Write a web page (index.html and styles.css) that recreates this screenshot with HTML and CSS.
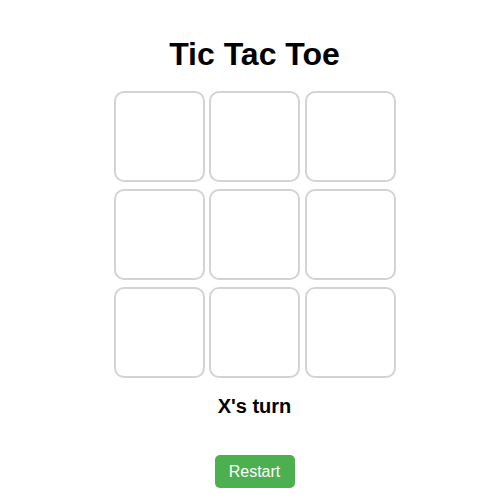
FILE: index.html
```html
<!DOCTYPE html>
<html>
<head>
<meta charset="utf-8">
<link rel="stylesheet" href="styles.css">
</head>
<body>
<div class="app">
  <h1 class="title">Tic Tac Toe</h1>
  <div class="board">
    <div class="cell"></div><div class="cell"></div><div class="cell"></div>
    <div class="cell"></div><div class="cell"></div><div class="cell"></div>
    <div class="cell"></div><div class="cell"></div><div class="cell"></div>
  </div>
  <div class="status">X's turn</div>
  <button class="restart">Restart</button>
</div>
</body>
</html>
```
FILE: styles.css
```css
html, body {
  margin: 0;
  padding: 0;
  background: #fff;
}
body {
  font-family: "Liberation Sans", Arial, sans-serif;
  color: #000;
}
.app {
  display: flex;
  flex-direction: column;
  align-items: center;
  padding-left: 9px;
}
.title {
  font-size: 32px;
  font-weight: bold;
  margin: 36px 0 0 0;
  line-height: 37px;
}
.board {
  margin-top: 18px;
  display: grid;
  grid-template-columns: repeat(3, 91px);
  grid-auto-rows: 91px;
  column-gap: 4.5px;
  row-gap: 7px;
}
.cell {
  box-sizing: border-box;
  border: 2px solid #d3d3d3;
  border-radius: 10px;
  background: #fff;
}
.status {
  margin-top: 17px;
  font-size: 20px;
  font-weight: bold;
  line-height: 23px;
}
.restart {
  margin-top: 37px;
  width: 80px;
  height: 33px;
  border: none;
  border-radius: 5px;
  background: #4caf50;
  color: #fff;
  font-family: "Liberation Sans", Arial, sans-serif;
  font-size: 16px;
  padding: 0;
}
```
